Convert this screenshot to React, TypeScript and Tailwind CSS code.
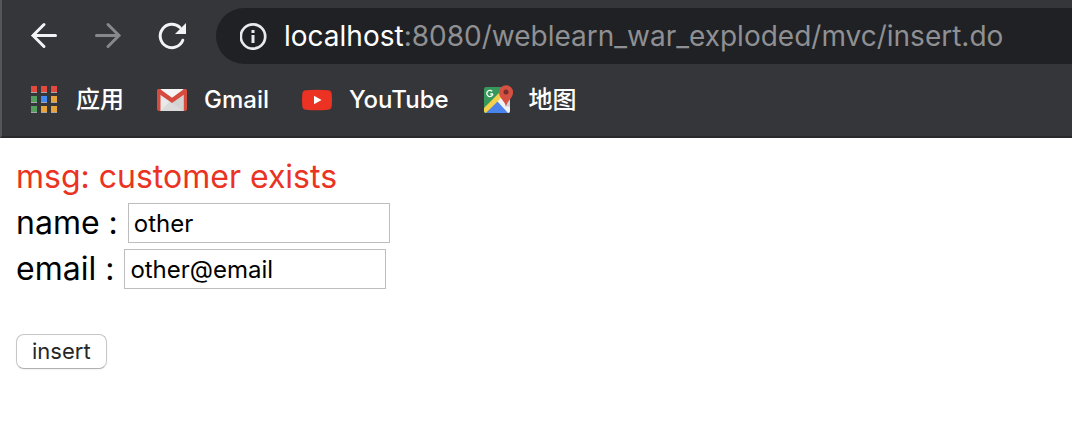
import type { ReactNode } from "react";

function BackIcon() {
  return (
    <svg viewBox="0 0 32 32" className="size-8" fill="none" stroke="currentColor" strokeWidth="3" strokeLinecap="round" aria-hidden="true">
      <path d="M27.500 15.500H5M16 4.500l-11 11 11 11" />
    </svg>
  );
}

function ForwardIcon() {
  return (
    <svg viewBox="0 0 32 32" className="size-8" fill="none" stroke="currentColor" strokeWidth="3" strokeLinecap="round" aria-hidden="true">
      <path d="M4.500 15.500H27M16 4.500l11 11-11 11" />
    </svg>
  );
}

function ReloadIcon() {
  return (
    <svg viewBox="0 0 32 32" className="size-8" aria-hidden="true">
      <path d="M26.800 20.200A11.700 11.700 0 1 1 24 7.500" fill="none" stroke="currentColor" strokeWidth="3" strokeLinecap="round" />
      <path d="M30 3v11H19z" fill="currentColor" />
    </svg>
  );
}

function InfoIcon() {
  return (
    <svg viewBox="0 0 28 28" className="size-7 shrink-0" aria-hidden="true">
      <circle cx="13" cy="14.500" r="12.200" fill="none" stroke="currentColor" strokeWidth="2.700" />
      <path d="M11.500 8h3v3h-3zM11.500 13h3v8h-3z" fill="currentColor" />
    </svg>
  );
}

const tiles = [
  "#e34a3f", "#e34a3f", "#e34a3f",
  "#559d60", "#4389f0", "#e8a33a",
  "#559d60", "#e8a33a", "#e8a33a",
];

function AppsIcon() {
  return (
    <svg viewBox="0 0 32 32" className="size-8" shapeRendering="crispEdges" aria-hidden="true">
      {tiles.map((color, i) => {
        const x = 3 + (i % 3) * 10;
        const y = 2 + Math.floor(i / 3) * 10;
        return (
          <g key={i}>
            <rect x={x} y={y} width="6" height="7" fill="#a5a6a8" />
            <rect x={x} y={y} width="6" height="6" fill={color} />
          </g>
        );
      })}
    </svg>
  );
}

function GmailIcon() {
  return (
    <svg viewBox="0 0 32 32" className="size-8" aria-hidden="true">
      <rect x="1" y="5" width="30" height="22" rx="2" fill="#d54c3f" />
      <path d="M4.5 6h23v21h-23z" fill="#e9e9e9" />
      <path d="M4.5 27 14 17l2 1.5 2-1.5 9.500 10z" fill="#dadada" />
      <path d="M16 18.500 27.500 10v17z" fill="#d2d2d2" />
      <path d="M4 5h24L16 14z" fill="#f4f4f4" />
      <path d="M1 7c0-2 2.200-2.600 3.600-1.600L16 13.800 27.400 5.400C28.800 4.400 31 5 31 7v1.500L16 19 1 8.500z" fill="#d54c3f" />
    </svg>
  );
}

function YouTubeIcon() {
  return (
    <svg viewBox="0 0 32 32" className="size-8" aria-hidden="true">
      <path d="M5 6.200Q16 5.200 27 6.200q3.300.3 3.700 3.300.6 6.500 0 13-.4 3-3.700 3.300-11 1-22 0-3.300-.3-3.700-3.300-.6-6.500 0-13Q1.700 6.500 5 6.200z" fill="#ec3223" />
      <path d="m13 11.700 7.600 4.300-7.600 4.300z" fill="#fff" />
    </svg>
  );
}

function MapsIcon() {
  return (
    <svg viewBox="0 0 32 32" className="size-8" aria-hidden="true">
      <rect x="3" y="3" width="26" height="26" rx="2" fill="#36985a" />
      <path d="M16 16 29 8v19L16 16z" fill="#d9dadd" />
      <path d="M3 24 20 7l5 5L5 29q-2 0-2-2z" fill="#f5d04c" />
      <path d="M5 29 16.500 17.500 28 29z" fill="#4a83ec" />
      <path d="m16.500 17.500 4.500-4.500 8 8v6q0 2-2 2z" fill="#f1f1f2" />
      <path d="M23 14h6v9l-4-1z" fill="#cfd0d2" />
      <path d="M12 10H9.300M11.200 7.300A3.100 3.100 0 1 0 12 10" fill="none" stroke="#fff" strokeWidth="1.300" />
      <path d="M25 23c-.6-6-7-8.500-7-14.800a7 7 0 0 1 14 0C32 14.500 25.600 17 25 23z" fill="#d55042" />
      <circle cx="25" cy="8" r="2.500" fill="#74302b" />
    </svg>
  );
}

function Bookmark({ icon, children }: { icon: ReactNode; children: ReactNode }) {
  return (
    <a href="#" className="flex items-center gap-4 whitespace-nowrap">
      {icon}
      {children}
    </a>
  );
}

function Field({ id, label, value }: { id: string; label: string; value: string }) {
  return (
    <div className="flex h-[46px] items-center gap-[10px]">
      <label htmlFor={id}>{label} :</label>
      <input
        id={id}
        name={id}
        defaultValue={value}
        className="h-10 w-[262px] border border-[#bdbdbd] bg-white px-[5px] text-2xl outline-none"
      />
    </div>
  );
}

export default function App() {
  return (
    <div className="min-h-screen bg-white font-['Inter','Noto_Sans_CJK_SC',sans-serif] text-black">
      <header className="border-b-2 border-l-2 border-b-[#29292b] border-l-[#555659] bg-[#35363a] pt-2 text-white">
        <nav className="flex items-center pl-[14px]" aria-label="Browser">
          <div className="flex gap-2 pr-4 text-[#f1f3f4]">
            <button type="button" aria-label="Back" className="grid size-14 place-items-center"><BackIcon /></button>
            <button type="button" aria-label="Forward" disabled className="grid size-14 place-items-center text-[#87888b]"><ForwardIcon /></button>
            <button type="button" aria-label="Reload" className="grid size-14 place-items-center"><ReloadIcon /></button>
          </div>
          <div className="flex h-14 min-w-0 flex-1 items-center gap-4 rounded-l-full bg-[#202124] pl-6 text-[#e8eaed]">
            <InfoIcon />
            <div role="textbox" aria-label="Address" className="truncate text-[28px] text-[#8f9093]">
              <span className="text-white">localhost</span>:8080/weblearn_war_exploded/mvc/insert.do
            </div>
          </div>
        </nav>
        <nav className="flex h-[72px] items-center gap-8 pl-[26px] text-2xl font-medium" aria-label="Bookmarks">
          <Bookmark icon={<AppsIcon />}>应用</Bookmark>
          <Bookmark icon={<GmailIcon />}>Gmail</Bookmark>
          <Bookmark icon={<YouTubeIcon />}>YouTube</Bookmark>
          <Bookmark icon={<MapsIcon />}>地图</Bookmark>
        </nav>
      </header>
      <main className="px-4 pt-4 text-[32px]">
        <p className="leading-[46px] text-[#ea3323]">msg: customer exists</p>
        <form onSubmit={(e) => e.preventDefault()}>
          <Field id="name" label="name" value="other" />
          <Field id="email" label="email" value="other@email" />
          <button
            type="submit"
            className="mt-[42px] flex h-[35px] items-center rounded-lg border border-[#c6c6c6] border-b-[#b0b0b0] bg-white px-[15px] text-[22px] text-[#262626] shadow-xs"
          >
            insert
          </button>
        </form>
      </main>
    </div>
  );
}
